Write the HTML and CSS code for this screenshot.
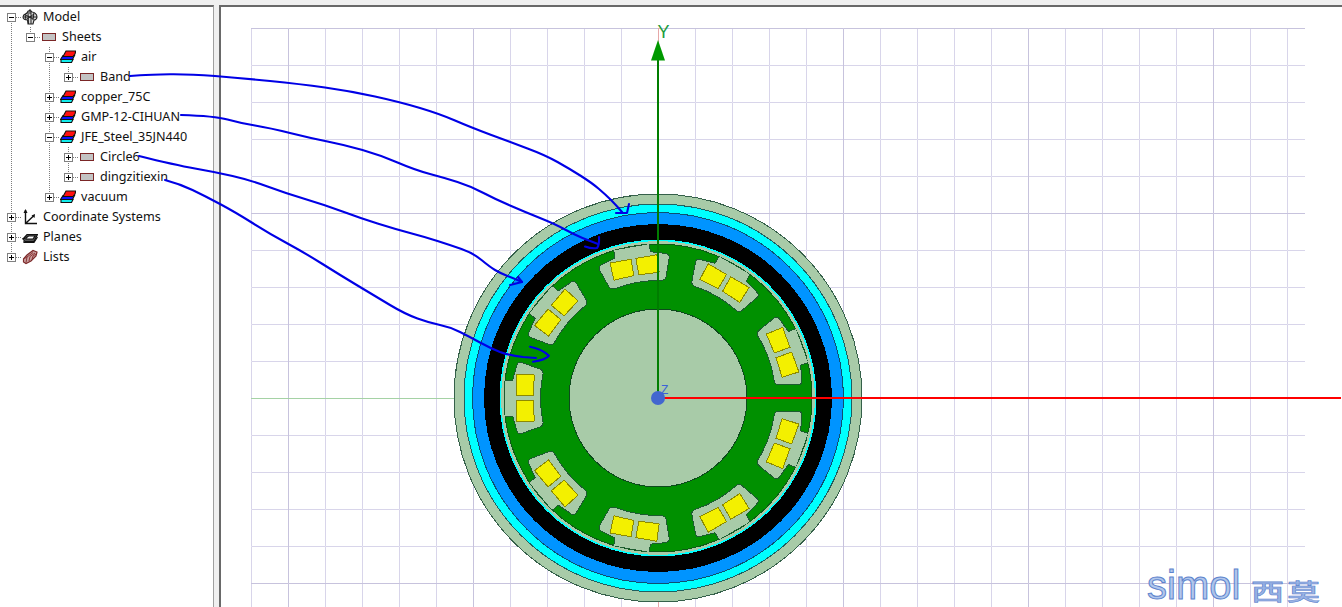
FILE: index.html
```html
<!DOCTYPE html>
<html lang="en">
<head>
<meta charset="utf-8">
<title>Model</title>
<link rel="stylesheet" href="styles.css">
</head>
<body>
<svg class="defs" width="0" height="0" aria-hidden="true">
  <defs>
    <g id="i-sheet"><rect class="sheet" x="1.5" y="4.5" width="13" height="7"/></g>
    <g id="i-layers">
      <path class="lay-c" d="M1 13.500V10.500H13L11.500 13.500Z"/>
      <path class="lay-b" d="M0.500 10.500 3 6.500H14.500L12.500 10.500Z"/>
      <path class="lay-r" d="M3 7.500 6 2H15.800L15 5 13 7.500Z"/>
    </g>
    <g id="i-model">
      <path class="wire" d="M1 8C1 5 4 5 5 4 6 1 9 1 10 3 12 3 15 5 15 8 15 10 13 11 12 11L11 15H6L5.500 11C3 11 1 10 1 8Z"/>
      <path class="wire-in" d="M3 5 4 11M6 3 6.500 15M9 2 9 15M12 3.500 11 11M1 8H15M3 5.500 11 10M12 5 5 10M8 0V5"/>
    </g>
    <g id="i-axes">
      <path class="axes" d="M3.500 1V14.500H15M3.500 14.500 12 6.500"/>
      <path class="axes-fill" d="M3.500 0 5.500 4H1.500ZM13 5 12.500 9 9.500 6.500Z"/>
    </g>
    <g id="i-planes">
      <path class="planes" d="M1 10 5 5.500H15.500L12 12.500H3ZM4 9 6.500 7H13L11 10H4Z"/>
      <path class="planes-line" d="M0.500 9.500H3M2 12V13.500H12L15.500 8"/>
    </g>
    <g id="i-lists">
      <path class="lists" d="M1.500 10 5 6 11 1.500 15 3 14 7 9 12 4 14.500 1.500 13Z"/>
      <path class="lists-line" d="M4 13.500 5 8 11 3.500M7 12 8 7.500 13 4M10 10.500 11 7 14 5M5 8 1.500 10"/>
    </g>
  </defs>
</svg>

<div class="app">
  <aside class="tree">
    <div class="row"><span class="exp b"><i class="box minus"></i></span><svg class="ic" viewBox="0 0 16 16"><use href="#i-model"/></svg><span class="lbl">Model</span></div>
    <div class="row"><span class="g v"></span><span class="exp t"><i class="box minus"></i></span><svg class="ic" viewBox="0 0 16 16"><use href="#i-sheet"/></svg><span class="lbl">Sheets</span></div>
    <div class="row"><span class="g v"></span><span class="g"></span><span class="exp t b"><i class="box minus"></i></span><svg class="ic" viewBox="0 0 16 16"><use href="#i-layers"/></svg><span class="lbl">air</span></div>
    <div class="row"><span class="g v"></span><span class="g"></span><span class="g v"></span><span class="exp t"><i class="box plus"></i></span><svg class="ic" viewBox="0 0 16 16"><use href="#i-sheet"/></svg><span class="lbl">Band</span></div>
    <div class="row"><span class="g v"></span><span class="g"></span><span class="exp t b"><i class="box plus"></i></span><svg class="ic" viewBox="0 0 16 16"><use href="#i-layers"/></svg><span class="lbl">copper_75C</span></div>
    <div class="row"><span class="g v"></span><span class="g"></span><span class="exp t b"><i class="box plus"></i></span><svg class="ic" viewBox="0 0 16 16"><use href="#i-layers"/></svg><span class="lbl">GMP-12-CIHUAN</span></div>
    <div class="row"><span class="g v"></span><span class="g"></span><span class="exp t b"><i class="box minus"></i></span><svg class="ic" viewBox="0 0 16 16"><use href="#i-layers"/></svg><span class="lbl">JFE_Steel_35JN440</span></div>
    <div class="row"><span class="g v"></span><span class="g"></span><span class="g v"></span><span class="exp t b"><i class="box plus"></i></span><svg class="ic" viewBox="0 0 16 16"><use href="#i-sheet"/></svg><span class="lbl">Circle6</span></div>
    <div class="row"><span class="g v"></span><span class="g"></span><span class="g v"></span><span class="exp t"><i class="box plus"></i></span><svg class="ic" viewBox="0 0 16 16"><use href="#i-sheet"/></svg><span class="lbl">dingzitiexin</span></div>
    <div class="row"><span class="g v"></span><span class="g"></span><span class="exp t"><i class="box plus"></i></span><svg class="ic" viewBox="0 0 16 16"><use href="#i-layers"/></svg><span class="lbl">vacuum</span></div>
    <div class="row"><span class="exp t b"><i class="box plus"></i></span><svg class="ic" viewBox="0 0 16 16"><use href="#i-axes"/></svg><span class="lbl">Coordinate Systems</span></div>
    <div class="row"><span class="exp t b"><i class="box plus"></i></span><svg class="ic" viewBox="0 0 16 16"><use href="#i-planes"/></svg><span class="lbl">Planes</span></div>
    <div class="row"><span class="exp t"><i class="box plus"></i></span><svg class="ic" viewBox="0 0 16 16"><use href="#i-lists"/></svg><span class="lbl">Lists</span></div>
  </aside>

  <main class="view">
    <svg class="scene" viewBox="221 7 1120 600">
      <defs>
        <pattern id="grid" x="251" y="28" width="37" height="37" patternUnits="userSpaceOnUse">
          <path class="gridline" d="M0.500 37V0.500H37"/>
        </pattern>
        <pattern id="grid-major" x="288" y="28" width="185" height="185" patternUnits="userSpaceOnUse">
          <path class="gridline-major" d="M0.500 185V0.500H185"/>
        </pattern>
        <g id="pocket">
          <path class="pk" d="M-153.500 -18H-145.300L-141 -33Q-140 -36.500 -136.500 -35.500L-118 -29Q-114.500 -27.500 -115 -24A118 118 0 0 0 -115 24Q-114.500 27.500 -118 29L-136.500 35.500Q-140 36.500 -141 33L-145.300 18H-153.500Z"/>
          <path class="mag" d="M-141.300 -23.700-123.700 -23-124.700 -2.500-141.300 -2.500Z"/>
          <path class="mag" d="M-141.300 2.500-124.700 2.500-123.700 23-141.300 23.700Z"/>
        </g>
      </defs>
      <rect x="251" y="28" width="1054" height="580" fill="url(#grid)"/>
      <rect x="251" y="28" width="1054" height="580" fill="url(#grid-major)"/>
      <path class="axis-x-neg" d="M251 398.500H460"/>
      <path class="axis-y-pale" d="M658.500 28V607"/>

      <g transform="translate(658 398)" class="motor">
        <circle class="c-sage" r="204"/>
        <circle class="c-cyan" r="194"/>
        <circle class="c-blue" r="185.500"/>
        <circle class="c-black" r="174"/>
        <circle class="c-cyan2" r="158.500"/>
        <circle class="c-gap" r="157"/>
        <circle class="c-green" r="154"/>
        <use href="#pocket"/>
        <use href="#pocket" transform="rotate(40)"/>
        <use href="#pocket" transform="rotate(80)"/>
        <use href="#pocket" transform="rotate(120)"/>
        <use href="#pocket" transform="rotate(160)"/>
        <use href="#pocket" transform="rotate(200)"/>
        <use href="#pocket" transform="rotate(240)"/>
        <use href="#pocket" transform="rotate(280)"/>
        <use href="#pocket" transform="rotate(320)"/>
        <circle class="c-ringcap" r="155.200"/>
        <circle class="c-inner" r="89"/>
      </g>

      <path class="axis-y" d="M658 60V398"/>
      <path class="arrow-y" d="M658 40 665 60.500H651Z"/>
      <path class="axis-x" d="M658 398H1342"/>
      <circle class="origin" cx="658" cy="398" r="7"/>
      <text class="lab-y" x="657.500" y="38">Y</text>
      <text class="lab-z" x="661" y="394">Z</text>

      <g class="logo">
        <text class="logo-en" x="1147" y="598.500">simol</text>
        <text class="logo-cn" transform="translate(1251 600) scale(1 .7)">西莫</text>
      </g>
    </svg>
  </main>

  <svg class="notes" viewBox="0 0 1342 607">
    <path class="ink" d="M130 76L140 75.200Q150 74.500 170 74.200Q190 74 215 76Q240 78 270 81Q300 84 325 87.500Q350 91 375 96.500Q400 102 420 108Q440 114 455 120.500Q470 127 490 134.500Q510 142 527.500 148.500Q545 155 557.500 162Q570 169 581 176Q592 183 599 189Q606 195 611 200Q616 205 622 212"/>
    <path class="ink" d="M616 213H627L629 204"/>
    <path class="ink" d="M181 115Q215 116 227.500 119.500Q240 123 255 125.500Q270 128 290 133Q310 138 327.500 141.500Q345 145 362.500 150Q380 155 397.500 162.500Q415 170 430 174Q445 178 457.500 182Q470 186 482.500 192.500Q495 199 510 205.500Q525 212 540 218Q555 224 565 229.500Q575 235 582.500 238Q590 241 598 244"/>
    <path class="ink" d="M585 246.500Q592 249 597 248 599.500 245 599 237"/>
    <path class="ink" d="M139 156Q175 165 195 168.500Q215 172 232.500 176Q250 180 267.500 186.500Q285 193 305 199Q325 205 342.500 211.500Q360 218 377.500 223.500Q395 229 410 233Q425 237 437.500 241Q450 245 461.500 249Q473 253 481.500 260Q490 267 495 270Q500 273 507.500 276Q515 279 522 282"/>
    <path class="ink" d="M510 285 522 282 518 277"/>
    <path class="ink" d="M165 180Q180 184 192.500 190Q205 196 220 204Q235 212 252.500 223Q270 234 287.500 243.500Q305 253 322.500 264Q340 275 357.500 285.500Q375 296 390 305Q405 314 417.500 318.500Q430 323 440 325Q450 327 460 332Q470 337 480 342.500Q490 348 500 352Q510 355.700 523 357L536 358"/>
    <path class="ink" d="M530 346.700Q542 349 549 355.700 546 360 533 361.700"/>
  </svg>
</div>
</body>
</html>
```
FILE: styles.css
```css
:root {
  --dv: repeating-linear-gradient(to bottom, #7d7d7d 0 1px, transparent 1px 2px);
  --dh: repeating-linear-gradient(to right, #7d7d7d 0 1px, transparent 1px 2px);
}

html, body {
  margin: 0;
  padding: 0;
  background: #f0f0f0;
  overflow: hidden;
}

.defs {
  display: block;
  height: 0;
}

.app {
  position: relative;
  display: flex;
  width: 1342px;
  height: 607px;
  padding-top: 5px;
  box-sizing: border-box;
  background: #f0f0f0;
  overflow: hidden;
}

/* tree panel */
.tree {
  width: 214px;
  flex: none;
  box-sizing: border-box;
  padding-left: 2px;
  background: #fff;
  border-top: 2px solid #696969;
  border-right: 1px solid #a0a0a0;
  font: 12.6px/20px "Noto Sans", "Open Sans", sans-serif;
  color: #111;
}

.row {
  display: flex;
  align-items: center;
  height: 20px;
}

.g, .exp {
  display: flex;
  flex: none;
  width: 19px;
  height: 20px;
  background-repeat: no-repeat;
}

.g.v {
  background-image: var(--dv);
  background-size: 1px 20px;
  background-position: 9px 0;
}

.exp {
  background-image: var(--dh);
  background-size: 9px 1px;
  background-position: 10px 10px;
}

.exp.t {
  background-image: var(--dh), var(--dv);
  background-size: 9px 1px, 1px 10px;
  background-position: 10px 10px, 9px 0;
}

.exp.b {
  background-image: var(--dh), var(--dv);
  background-size: 9px 1px, 1px 10px;
  background-position: 10px 10px, 9px 10px;
}

.exp.t.b {
  background-image: var(--dh), var(--dv);
  background-size: 9px 1px, 1px 20px;
  background-position: 10px 10px, 9px 0;
}

.box {
  display: block;
  box-sizing: border-box;
  width: 9px;
  height: 9px;
  margin: 6px 0 0 5px;
  border: 1px solid #808080;
  background-color: #fff;
  background-repeat: no-repeat;
}

.box.minus {
  background-image: linear-gradient(#000, #000);
  background-size: 5px 1px;
  background-position: 1px 3px;
}

.box.plus {
  background-image: linear-gradient(#000, #000), linear-gradient(#000, #000);
  background-size: 5px 1px, 1px 5px;
  background-position: 1px 3px, 3px 1px;
}

.ic {
  flex: none;
  width: 16px;
  height: 16px;
  margin-left: 1px;
}

.lbl {
  margin-left: 5px;
  white-space: nowrap;
}

/* tree icons */
.sheet { fill: #c3c3c3; stroke: #7a2626; stroke-width: 1; }
.lay-r { fill: #ff1010; stroke: #111; stroke-width: 1.1; }
.lay-b { fill: #1010ff; stroke: #111; stroke-width: 1.1; }
.lay-c { fill: #10ecec; stroke: #111; stroke-width: 1.1; }
.wire { fill: #d8d8d8; stroke: #222; stroke-width: 1.1; }
.wire-in { fill: none; stroke: #222; stroke-width: 1; }
.axes { fill: none; stroke: #111; stroke-width: 1.4; }
.axes-fill { fill: #111; }
.planes { fill: #555; fill-rule: evenodd; stroke: #111; stroke-width: 1.2; }
.planes-line { fill: none; stroke: #111; stroke-width: 1.2; }
.lists { fill: #c9a0a0; stroke: #7c2a2a; stroke-width: 1.2; }
.lists-line { fill: none; stroke: #8a3535; stroke-width: 1; }

/* graphics view */
.view {
  flex: 1;
  min-width: 0;
  margin-left: 5px;
  background: #fff;
  border-top: 2px solid #696969;
  border-left: 2px solid #696969;
}

.scene {
  display: block;
  width: 1120px;
  height: 600px;
}

.gridline { fill: none; stroke: #d8d5ea; stroke-width: 1; }
.gridline-major { fill: none; stroke: #c7c3dd; stroke-width: 1; }
.axis-x-neg { stroke: #a5d2a5; stroke-width: 1; fill: none; }
.axis-y-pale { stroke: #e6a8a8; stroke-width: 1; fill: none; }
.axis-y { stroke: #007d00; stroke-width: 2; fill: none; }
.arrow-y { fill: #009900; }
.axis-x { stroke: #ff0000; stroke-width: 2; fill: none; }
.origin { fill: #4266cf; }

.lab-y {
  font: 18px "Liberation Sans", sans-serif;
  fill: #1c9c3c;
}

.lab-z {
  font: 12px "Liberation Sans", sans-serif;
  fill: #3c62d8;
}

/* motor */
.motor { shape-rendering: crispEdges; }
.c-sage { fill: #a8cba8; stroke: #35604a; stroke-width: 1; }
.c-cyan { fill: #00ffff; stroke: #1f5f5f; stroke-width: 1; }
.c-blue { fill: #0094ff; stroke: #0f4f70; stroke-width: 1; }
.c-black { fill: #000; }
.c-cyan2 { fill: #00ffff; }
.c-gap { fill: #a8cba8; }
.c-green { fill: #009000; stroke: #0c5a16; stroke-width: 1; }
.c-inner { fill: #a8cba8; stroke: #0c4a1c; stroke-width: 1; }
.c-ringcap { fill: none; stroke: #a8cba8; stroke-width: 1.4; }
.pk { fill: #a8cba8; stroke: #1c5c30; stroke-width: 1; }
.mag { fill: #f3f000; stroke: #8d8a00; stroke-width: 1; }

/* logo */
.logo { opacity: .9; }

.logo-en {
  font: 40px "Liberation Sans", sans-serif;
  fill: #a9c1ea;
  stroke: #4c76c8;
  stroke-width: 1;
}

.logo-cn {
  font: 33px "Noto Sans CJK SC", sans-serif;
  font-weight: 500;
  letter-spacing: 3px;
  fill: #8fabe2;
  stroke: #4c76c8;
  stroke-width: .8;
}

/* hand-drawn annotations over both panels */
.notes {
  position: absolute;
  left: 0;
  top: 0;
  width: 1342px;
  height: 607px;
  pointer-events: none;
}

.ink {
  fill: none;
  stroke: #0000e6;
  stroke-width: 2.1;
  stroke-linejoin: round;
  stroke-linecap: round;
}
```
